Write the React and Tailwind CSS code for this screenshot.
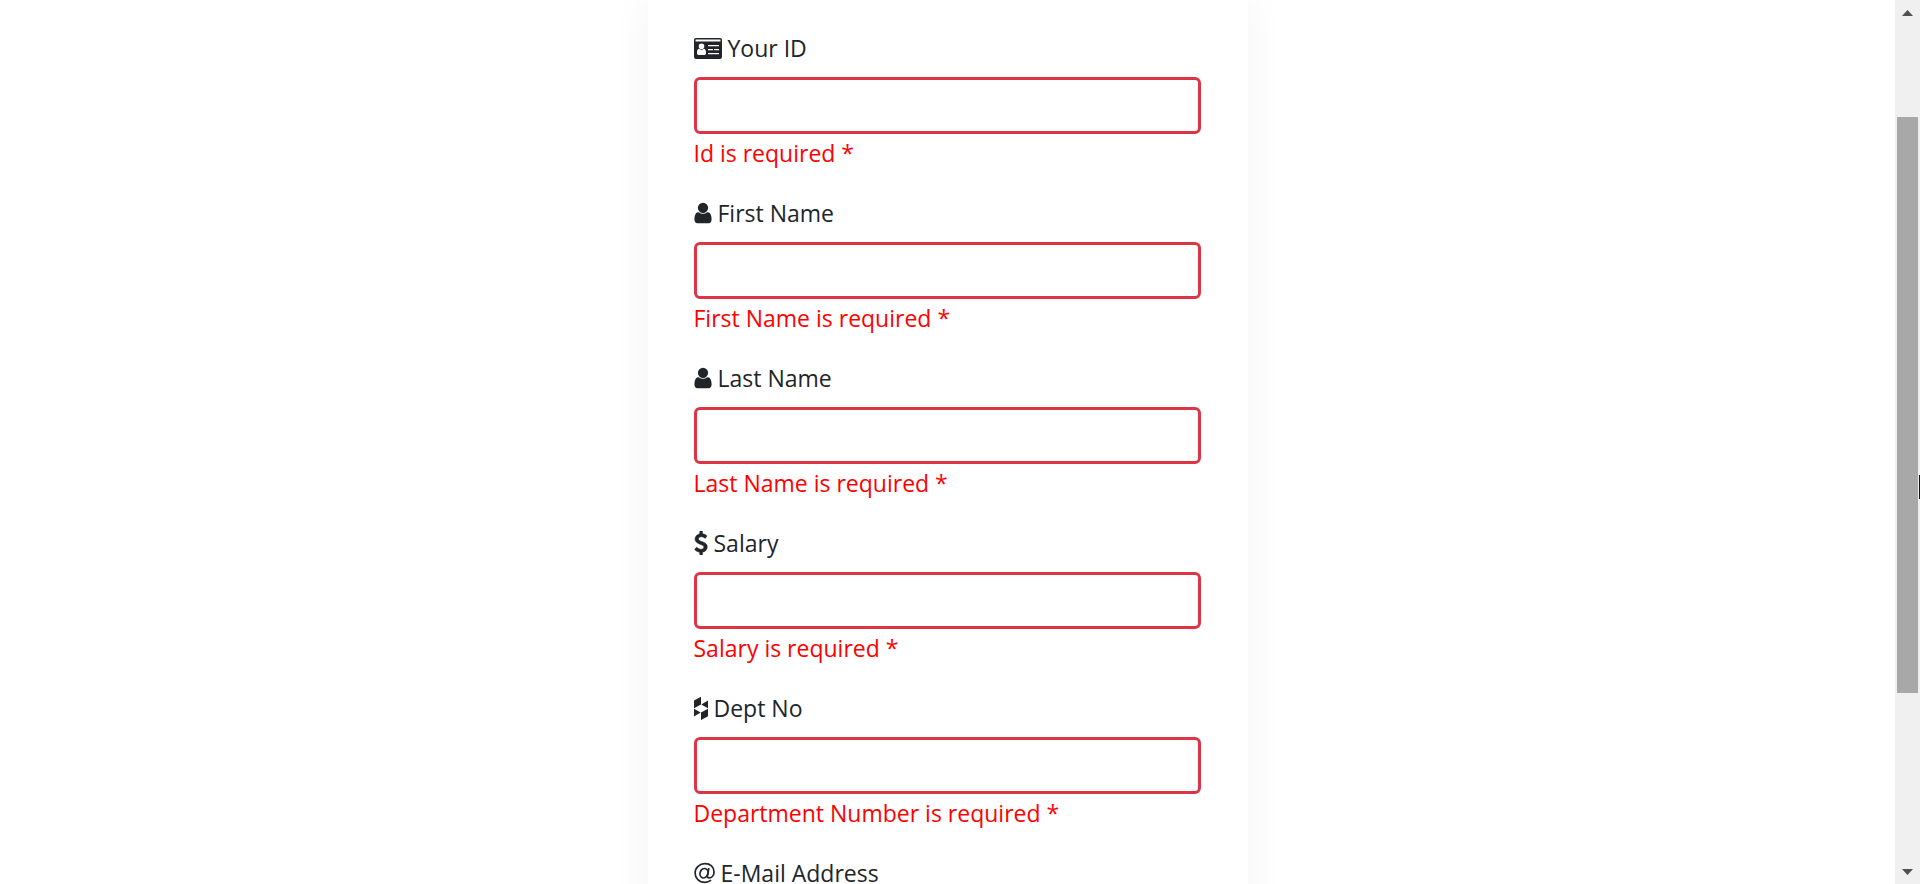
import React from "react";

function IdCardIcon() {
  return (
    <svg aria-hidden="true" viewBox="0 0 28 24" className="h-6 w-7 shrink-0" fill="currentColor">
      <path
        fillRule="evenodd"
        d="M2 2h24a2 2 0 0 1 2 2v17a2 2 0 0 1-2 2H2a2 2 0 0 1-2-2V4a2 2 0 0 1 2-2zM1.500 4v1.500h25V4a.5.5 0 0 0-.5-.5H2a.5.5 0 0 0-.5.5zM3 17c0 1.100.6 2 1.500 2h6c.9 0 1.500-.9 1.500-2 0-2.200-.5-4.200-2.300-4.200a3.200 3.200 0 0 1-4.400 0C3.500 12.800 3 14.800 3 17zM7.500 7.500a2.800 2.800 0 1 0 0 5.600 2.800 2.800 0 0 0 0-5.600zM14 17v1.300h11V17zM14 13v1.300h5V13zM20 13v1.300h5V13zM14 9v1.300h11V9z"
      />
    </svg>
  );
}

function UserIcon() {
  return (
    <svg aria-hidden="true" viewBox="256 0 1280 1792" className="h-6 w-[18px] shrink-0" fill="currentColor">
      <path d="M1536 1399q0 109-62.500 187t-150.500 78h-854q-88 0-150.500-78t-62.500-187q0-85 8.500-160.500t31.500-152 58.500-131 94-89 134.500-34.500q131 128 313 128t313-128q76 0 134.500 34.500t94 89 58.500 131 31.500 152 8.500 160.500zm-256-887q0 159-112.500 271.500t-271.500 112.500-271.500-112.500-112.500-271.500 112.500-271.500 271.500-112.500 271.500 112.500 112.500 271.500z" />
    </svg>
  );
}

function DollarIcon() {
  return (
    <svg aria-hidden="true" viewBox="384 0 1024 1792" className="h-6 w-3.5 shrink-0" fill="currentColor" stroke="currentColor" strokeWidth="40">
      <path d="M1362 1185q0 153-99.500 263.500t-258.500 136.500v175q0 14-9 23t-23 9h-135q-13 0-22.500-9.500t-9.500-22.500v-175q-66-9-127.500-31t-101.500-44.500-74-48-46.500-37.500-17.500-18q-17-21-2-41l103-135q7-10 23-12 15-2 24 9l2 2q113 99 243 125 37 8 74 8 81 0 142.500-43t61.500-122q0-28-15-53t-33.500-42-58.500-37.500-66-32-80-32.500q-39-16-61.500-25t-61.500-26.500-62.500-31-56.500-35.500-53.500-42.500-43.500-49-35.500-58-21-66.500-8.500-78q0-138 98-242t255-134v-180q0-13 9.500-22.500t22.500-9.500h135q14 0 23 9t9 23v176q57 6 110.500 23t87 33.500 63.500 37.500 39 29 15 14q17 18 5 38l-81 146q-8 15-23 16-14 3-27-7-3-3-14.500-12t-39-26.500-58.500-32-74.500-26-85.500-11.500q-95 0-155 43t-60 111q0 26 8.500 48t29.500 41.500 39.500 33 56 31 60.500 27 70 27.500q53 20 81 31.500t76 35 75.500 42.500 62 50 53 63.500 31.500 76.500 13 94z" />
    </svg>
  );
}

function HouzzIcon() {
  return (
    <svg aria-hidden="true" viewBox="0 0 14 24" className="h-6 w-3.5 shrink-0" fill="currentColor">
      <path d="M0 4.500 7 .7v7.800L0 12.300zM7.300 8.400 14 4.400v7.900zM0 12.700l6.700 3.800L0 20.500zM7 16.500 14 12.700v7.600l-7 3.800z" />
    </svg>
  );
}

function AtIcon() {
  return (
    <svg aria-hidden="true" viewBox="0 0 21 24" className="h-6 w-[21px] shrink-0" fill="none" stroke="currentColor" strokeWidth="1.700">
      <ellipse cx="10" cy="12.200" rx="3.900" ry="4.800" transform="rotate(20 10 12.200)" />
      <path d="M14.900 7.200 13.500 14.700c-.3 1.500.2 2.200 1.500 2.200 2.800 0 5-2.400 5-6C20 5.700 16.300 2.600 11 2.600c-5.500 0-9.900 4-9.900 9.300s4 9.500 9.700 9.500c2.300 0 4.500-.8 6.300-2.200" />
    </svg>
  );
}

const fields = [
  { id: "employee-id", label: "Your ID", error: "Id is required *", Icon: IdCardIcon, type: "text" },
  { id: "first-name", label: "First Name", error: "First Name is required *", Icon: UserIcon, type: "text" },
  { id: "last-name", label: "Last Name", error: "Last Name is required *", Icon: UserIcon, type: "text" },
  { id: "salary", label: "Salary", error: "Salary is required *", Icon: DollarIcon, type: "text" },
  { id: "dept-no", label: "Dept No", error: "Department Number is required *", Icon: HouzzIcon, type: "text" },
  { id: "email", label: "E-Mail Address", Icon: AtIcon, type: "email" },
];

function Field({ id, label, error, Icon, type }) {
  return (
    <div className="mb-6">
      <label htmlFor={id} className="mb-[11px] flex h-9 items-center gap-1.5">
        <Icon />
        <span>{label}</span>
      </label>
      <input
        id={id}
        type={type}
        aria-invalid="true"
        aria-describedby={error ? `${id}-error` : undefined}
        className="block h-[57px] w-full rounded-md border-3 border-[#dc3545] bg-white px-[18px] outline-none"
      />
      {error && <p id={`${id}-error`} className="pt-px text-[#ff0000]">{error}</p>}
    </div>
  );
}

function ScrollBar() {
  return (
    <div aria-hidden="true" className="flex w-[25px] shrink-0 flex-col items-center justify-between bg-[#f0f0f0] pt-2.5 pb-[9px]">
      <svg viewBox="0 0 11 6" className="h-1.5 w-[11px]" fill="#505050"><path d="M0 6 5.500 0 11 6z" /></svg>
      <div className="mt-[101px] mb-auto h-[576px] w-[21px] bg-[#a8a8a8]" />
      <svg viewBox="0 0 11 6" className="h-1.5 w-[11px]" fill="#505050"><path d="M0 0h11L5.500 6z" /></svg>
    </div>
  );
}

export default function App() {
  return (
    <div className="relative flex h-screen overflow-hidden bg-white font-['Open_Sans','Noto_Sans',sans-serif] text-[23px] leading-9 text-[#212529]">
      <main className="min-w-0 flex-1 overflow-hidden">
        <form noValidate className="mx-auto w-full max-w-[600px] bg-white pt-[30px] pr-[47px] pl-[46px] shadow-[0_0_38px_rgba(0,0,0,0.05)]">
          {fields.map((field) => (
            <Field key={field.id} {...field} />
          ))}
        </form>
      </main>
      <ScrollBar />
      <div aria-hidden="true" className="absolute top-[475px] right-0 h-6 w-px bg-[#101018]" />
    </div>
  );
}
